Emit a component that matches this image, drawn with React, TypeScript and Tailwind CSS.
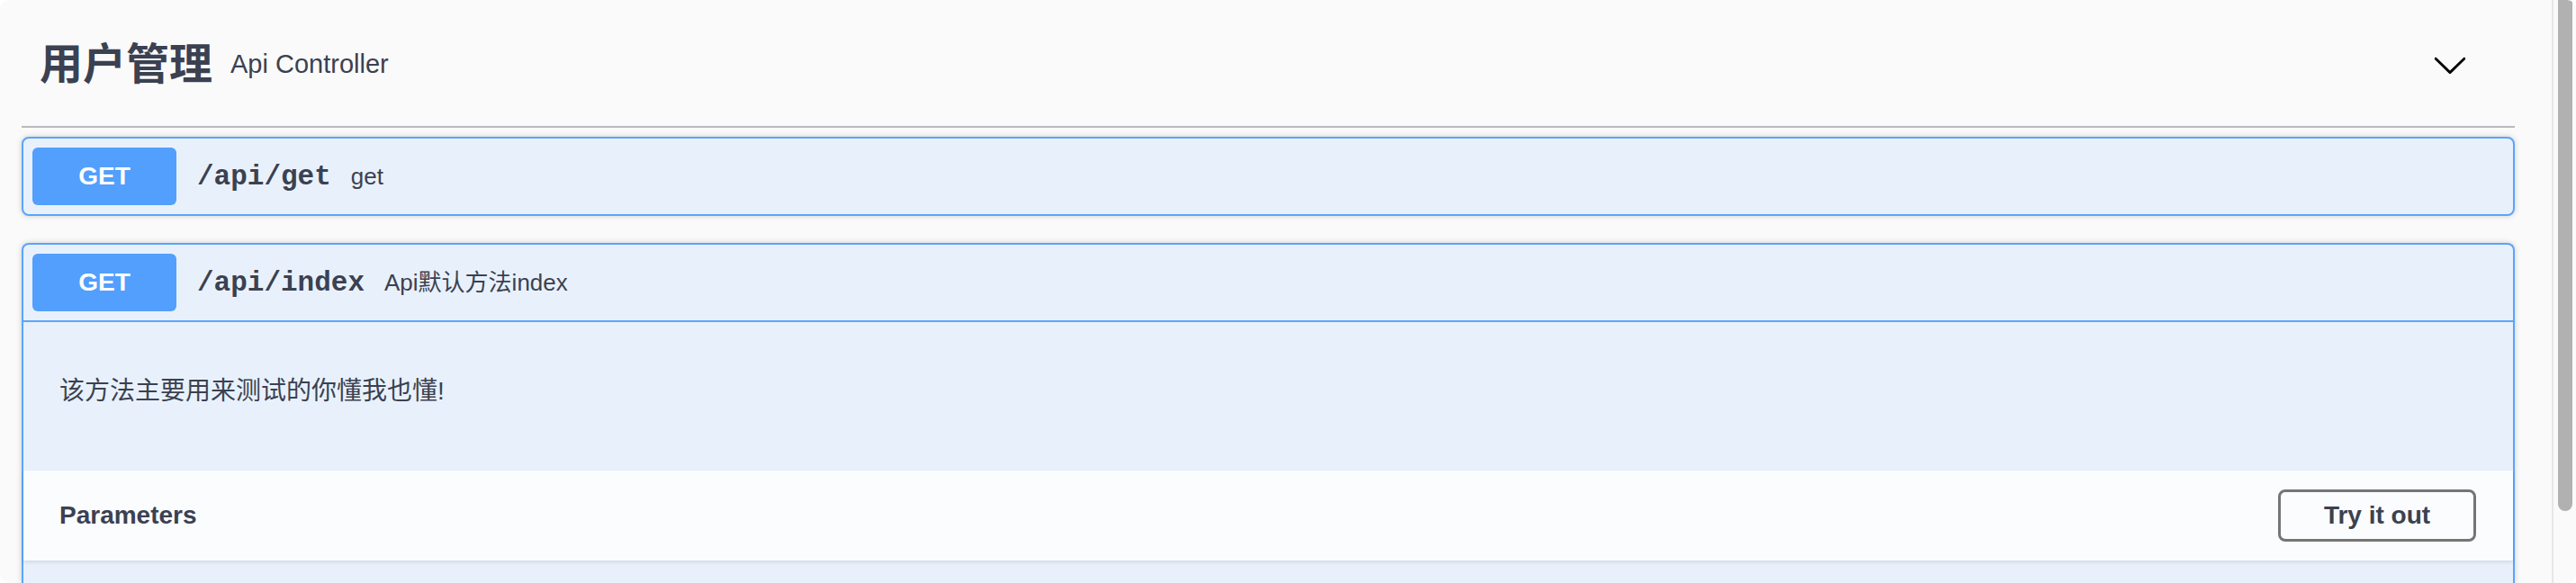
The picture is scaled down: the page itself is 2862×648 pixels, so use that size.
import React from "react";

function Chevron() {
  return (
    <svg width="40" height="40" viewBox="0 0 20 20" className="shrink-0" aria-hidden>
      <path
        fill="#000"
        d="M17.418 6.109c.272-.268.709-.268.979 0s.271.701 0 .969l-7.908 7.83c-.27.268-.707.268-.979 0l-7.908-7.83c-.27-.268-.27-.701 0-.969.271-.268.709-.268.979 0L10 13.25l7.418-7.141z"
      />
    </svg>
  );
}

function Summary({ path, desc }: { path: string; desc: string }) {
  return (
    <div className="flex items-center p-[10px]">
      <span className="flex h-[64px] w-[160px] shrink-0 items-center justify-center rounded-[6px] bg-[#529ffd] text-[28px] font-bold text-white">
        GET
      </span>
      <span className="ml-[23px] font-['Liberation_Mono',monospace] text-[31px] font-bold leading-none text-[#3b4151]">
        {path}
      </span>
      <span className="ml-[22px] text-[26px] leading-none text-[#3b4151]">{desc}</span>
    </div>
  );
}

export default function App() {
  return (
    <div className="flex h-[648px] w-[2862px] overflow-hidden rounded-[10px] bg-[#fafafa] font-['Liberation_Sans','Noto_Sans_CJK_SC',sans-serif] text-[#3b4151]">
      <div className="flex min-w-0 flex-1 flex-col pl-[24px] pr-[41px]">
        <div className="flex h-[142px] shrink-0 items-center border-b-2 border-[#b9bac0] pl-[20px] pr-[52px] pt-[3px]">
          <h3 className="text-[48px] font-bold leading-none text-[#3b4151]">用户管理</h3>
          <span className="ml-[20px] text-[29px] leading-none text-[#3b4151]">Api Controller</span>
          <div className="flex-1" />
          <Chevron />
        </div>

        <div className="mt-[10px] shrink-0 rounded-[8px] border-2 border-[#5ba4fd] bg-[#e8f1fb] shadow-[0_0_6px_rgba(0,0,0,0.19)]">
          <Summary path="/api/get" desc="get" />
        </div>

        <div className="mt-[30px] flex flex-1 flex-col rounded-t-[8px] border-x-2 border-t-2 border-[#5ba4fd] bg-[#e8f1fb] shadow-[0_0_6px_rgba(0,0,0,0.19)]">
          <div className="border-b-2 border-[#5ba4fd]">
            <Summary path="/api/index" desc="Api默认方法index" />
          </div>
          <div className="h-[165px] shrink-0 pl-[40px] pt-[56px]">
            <p className="text-[28px] leading-[42px] text-[#3b4151]">该方法主要用来测试的你懂我也懂!</p>
          </div>
          <div className="flex h-[100px] shrink-0 items-center justify-between bg-[#fafcfe] pl-[40px] pr-[41px] shadow-[0_2px_4px_rgba(0,0,0,0.1)]">
            <h4 className="text-[28px] font-bold leading-none text-[#3b4151]">Parameters</h4>
            <button className="flex h-[58px] w-[220px] items-center justify-center rounded-[8px] border-[3px] border-[#757575] bg-transparent text-[28px] font-bold text-[#3b4151]">
              Try it out
            </button>
          </div>
          <div className="flex-1" />
        </div>
      </div>

      <div className="flex w-[27px] shrink-0 border-l-2 border-[#e6e6e6] bg-[#fafafa] pl-[5px]">
        <div className="h-[568px] w-[16px] rounded-b-[8px] bg-[#b1b1b1]" />
      </div>
    </div>
  );
}
